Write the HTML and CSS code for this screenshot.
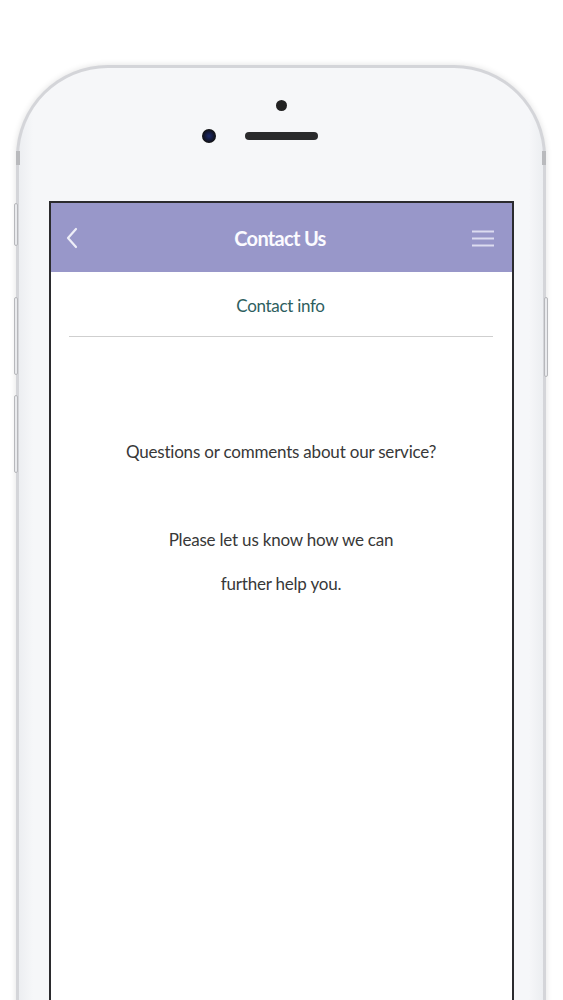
FILE: index.html
```html
<!DOCTYPE html>
<html>
<head>
<meta charset="utf-8">
<link rel="stylesheet" href="styles.css">
</head>
<body>
<div class="phone">
  <span class="btn btn-l1"></span>
  <span class="btn btn-l2"></span>
  <span class="btn btn-l3"></span>
  <span class="btn btn-r1"></span>
  <span class="band band-l"></span>
  <span class="band band-r"></span>
  <div class="bezel">
    <div class="sensors">
      <span class="dot"></span>
      <div class="cam-row">
        <span class="camera"></span>
        <span class="speaker"></span>
      </div>
    </div>
    <div class="screen">
      <header class="appbar">
        <svg class="back" width="14" height="22" viewBox="0 0 14 22"><path d="M11 2 L3 11 L11 20" fill="none" stroke="#eeeef8" stroke-width="2.2" stroke-linecap="round" stroke-linejoin="round"/></svg>
        <h1 class="title">Contact Us</h1>
        <svg class="menu" width="24" height="20" viewBox="0 0 24 20"><path d="M1 2.5 H23 M1 9.5 H23 M1 16.5 H23" stroke="#dcdcf0" stroke-width="2"/></svg>
      </header>
      <div class="tab">Contact info</div>
      <div class="content">
        <p class="q">Questions or comments about our service?</p>
        <p class="help">Please let us know how we can<br>further help you.</p>
      </div>
    </div>
  </div>
</div>
</body>
</html>
```

FILE: styles.css
```css
html, body {
  margin: 0;
  padding: 0;
  background: #ffffff;
  overflow: hidden;
  height: 1000px;
}
body {
  padding-top: 65px;
  box-sizing: border-box;
  font-family: "Lato", "Open Sans", sans-serif;
}
.phone {
  position: relative;
  margin-left: 16px;
  width: 530px;
  height: 1100px;
  border-radius: 92px 92px 0 0;
  background: #d4d5d9;
  box-shadow: 0 0 6px rgba(0,0,0,0.12);
  padding: 3px;
  box-sizing: border-box;
}
.bezel {
  height: 100%;
  border-radius: 89px 89px 0 0;
  background: linear-gradient(90deg, #eceef1 0px, #f6f7f9 14px, #f6f7f9 calc(100% - 14px), #eceef1 100%);
  padding-top: 28px;
  box-sizing: border-box;
  display: flex;
  flex-direction: column;
  align-items: center;
}
.sensors {
  display: flex;
  flex-direction: column;
  align-items: center;
  height: 105px;
  margin-left: 1px;
}
.dot {
  width: 11px;
  height: 11px;
  border-radius: 50%;
  background: #222;
  margin-top: 4px;
}
.cam-row {
  display: flex;
  align-items: center;
  gap: 29px;
  margin-top: 18px;
  margin-left: -44px;
}
.camera {
  width: 14px;
  height: 14px;
  border-radius: 50%;
  background: radial-gradient(circle at 50% 50%, #1c2a6a 0, #141a3a 40%, #111 70%);
}
.speaker {
  width: 73px;
  height: 8px;
  border-radius: 4px;
  background: #2a2a2c;
}
.screen {
  width: 465px;
  flex: 1;
  border: 2px solid #2b2b2e;
  border-bottom: none;
  background: #fff;
  box-sizing: border-box;
  margin-left: 0;
}
.appbar {
  height: 69px;
  background: #9897c9;
  display: flex;
  align-items: center;
  justify-content: space-between;
  padding: 0 16px 0 14px;
}
.back { margin-top: 0; }
.menu { margin-top: 2px; }
.title {
  margin: 0;
  color: #fbfbff;
  font-size: 20px;
  font-weight: 700;
  letter-spacing: -0.7px;
  padding-left: 10px;
}
.tab {
  margin: 0 19px 0 18px;
  height: 64px;
  line-height: 67px;
  text-align: center;
  color: #2e5e5e;
  font-size: 17px;
  border-bottom: 1px solid #cfcfcf;
  letter-spacing: -0.3px;
}
.content {
  text-align: center;
  color: #383838;
  font-size: 17px;
  letter-spacing: -0.2px;
}
.q {
  margin: 93px 0 0;
  line-height: 44px;
}
.help {
  margin: 44px 0 0;
  line-height: 44px;
}
.btn {
  position: absolute;
  width: 4px;
  background: #e9eaed;
  border: 1px solid #b7b8bc;
  border-radius: 2px;
  box-sizing: border-box;
}
.btn-l1 { left: -2px; top: 138px; height: 43px; }
.btn-l2 { left: -2px; top: 232px; height: 78px; }
.btn-l3 { left: -2px; top: 330px; height: 78px; }
.btn-r1 { right: -2px; top: 232px; height: 80px; }
.band {
  position: absolute;
  width: 4px;
  height: 14px;
  background: #b9babd;
  top: 86px;
}
.band-l { left: 0; }
.band-r { right: 0; }
```
